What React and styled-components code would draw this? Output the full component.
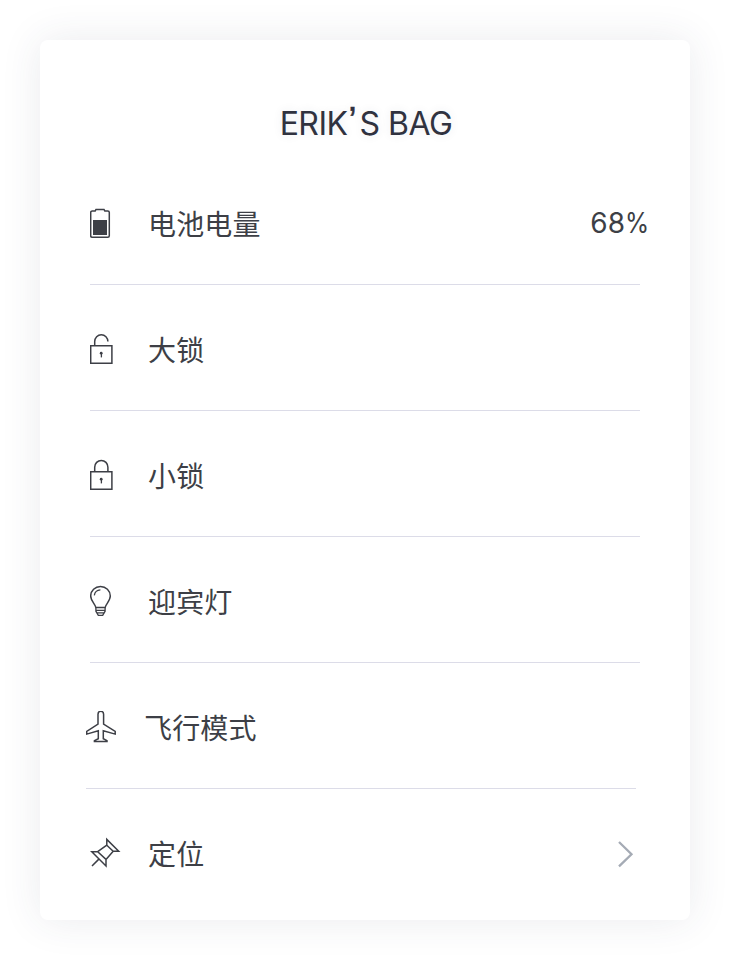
import React from 'react';
import styled, { createGlobalStyle } from 'styled-components';

const GlobalStyle = createGlobalStyle`
  * { box-sizing: border-box; }
  body { margin: 0; background: #fff; }
`;

const Page = styled.main`
  width: 730px;
  height: 960px;
  padding: 40px;
  overflow: hidden;
  background: #fff;
`;

const Card = styled.section`
  height: 880px;
  padding: 0 50px;
  border-radius: 8px;
  background: #fff;
  box-shadow: 0 0 40px rgba(53, 56, 84, 0.1);
`;

const Title = styled.h1`
  height: 119px;
  margin: 0;
  padding: 64px 0 0 2px;
  color: #30323f;
  font: 400 32px/40px Inter, sans-serif;
  letter-spacing: -0.5px;
  text-align: center;
  white-space: nowrap;
  text-shadow: 0 0 10px rgba(53, 56, 84, 0.1);
`;

const Apostrophe = styled.span`
  display: inline-block;
  width: 12px;
  font-family: 'Liberation Sans', sans-serif;
  font-size: 38px;
  line-height: 32px;
  letter-spacing: 0;
  transform: translate(-1px, -1px);
  -webkit-text-stroke: 0.4px #30323f;
`;

const List = styled.ul`
  margin: 0;
  padding: 0;
  list-style: none;
`;

const Row = styled.li`
  display: flex;
  align-items: flex-start;
  height: 126px;
  margin: 0 ${(p) => p.$shift || 0}px 0 -${(p) => p.$shift || 0}px;
  padding-top: 48px;
  border-bottom: 1px solid ${(p) => (p.$last ? 'transparent' : '#dcdce8')};
`;

const Icon = styled.svg`
  flex: none;
  width: 34px;
  height: 34px;
  fill: none;
  stroke: #3d3f46;
  stroke-width: 1.5;
`;

const Label = styled.span`
  flex: 1;
  margin: -1px 0 0 24px;
  color: #3d3f46;
  font: 400 28px/34px 'Noto Sans CJK SC', sans-serif;
  letter-spacing: 0.15px;
`;

const Value = styled.span`
  margin: -1px -7px 0 0;
  color: #3d3f46;
  font: 400 28px/34px Inter, sans-serif;
  letter-spacing: 0;
`;

const Percent = styled.span`
  display: inline-block;
  width: 22px;
  transform: scaleX(0.88);
  transform-origin: left;
`;

const Chevron = styled.svg`
  width: 20px;
  height: 30px;
  margin: 1px 4px 0 0;
  fill: none;
  stroke: #a5abb5;
  stroke-width: 2.3;
`;

const Battery = () => (
  <>
    <path d="M2.2 3.9H5.2L6 2.5H14L14.8 3.9H17.8Q19.3 3.9 19.3 5.4V28.8Q19.3 30.3 17.8 30.3H2.2Q.7 30.3 .7 28.8V5.4Q.7 3.9 2.2 3.9Z" />
    <path d="M3 13H17V28H3Z" fill="#3d3f46" stroke="none" />
  </>
);

const LockBody = () => (
  <>
    <path d="M.7 12.7H21.9V30.3H.7Z" />
    <circle cx="11.2" cy="20.2" r="1.4" fill="#3d3f46" stroke="none" />
    <path d="M11.4 20V24.4" strokeWidth="1.3" />
  </>
);

const OpenLock = () => (
  <>
    <LockBody />
    <path d="M4.7 12.5V8.5A6.6 6.8 0 0 1 17.9 8.5" />
  </>
);

const ClosedLock = () => (
  <>
    <LockBody />
    <path d="M4.7 12.5V8.2A6.6 6.8 0 0 1 17.9 8.2V12.5" />
  </>
);

const Bulb = () => (
  <>
    <path d="M5.9 22.6C5.2 19 .7 15.9 .7 11.1A9.8 9.6 0 0 1 20.3 11.1C20.3 15.9 15.8 19 15.1 22.6Z" />
    <path d="M4.3 10.4A6.5 6.5 0 0 1 10.4 4.9M5.9 22.4V26.2L8.3 30.3H12.7L15.1 26.2V22.4M6 25.3H15M7 27.9H14" strokeWidth="1.3" />
  </>
);

const Plane = () => (
  <path transform="translate(0 -.8)" d="M12 14V4Q12 1.1 14.8 1.1Q17.6 1.1 17.6 4V14L29.2 21.2V23.9L17.3 20.5V28.5L21 30.4V31.2H8.4V30.4L12.3 28.5V20.5L.7 23.9V21.2Z" />
);

const Pin = () => (
  <path d="M16.8 8.2V2.4L28.7 14.3H23.2ZM7.7 14.7H1.8L16 29V22.4ZM7.7 14.7L16.8 8.2M23.2 14.3L16 22.4M8.6 22.4L2 29" />
);

const rows = [
  { label: '电池电量', icon: Battery, value: '68' },
  { label: '大锁', icon: OpenLock },
  { label: '小锁', icon: ClosedLock },
  { label: '迎宾灯', icon: Bulb },
  { label: '飞行模式', icon: Plane, shift: 4 },
  { label: '定位', icon: Pin, link: true },
];

export default function App() {
  return (
    <Page>
      <GlobalStyle />
      <Card>
        <Title>
          ERIK<Apostrophe>’</Apostrophe>S BAG
        </Title>
        <List>
          {rows.map(({ label, icon: Glyph, value, shift, link }) => (
            <Row key={label} $shift={shift} $last={link}>
              <Icon viewBox="0 0 34 34" aria-hidden="true">
                <Glyph />
              </Icon>
              <Label>{label}</Label>
              {value && (
                <Value>
                  {value}
                  <Percent>%</Percent>
                </Value>
              )}
              {link && (
                <Chevron viewBox="0 0 20 30" aria-hidden="true">
                  <path d="M3 4L15.5 16.2L3 28.4" />
                </Chevron>
              )}
            </Row>
          ))}
        </List>
      </Card>
    </Page>
  );
}
